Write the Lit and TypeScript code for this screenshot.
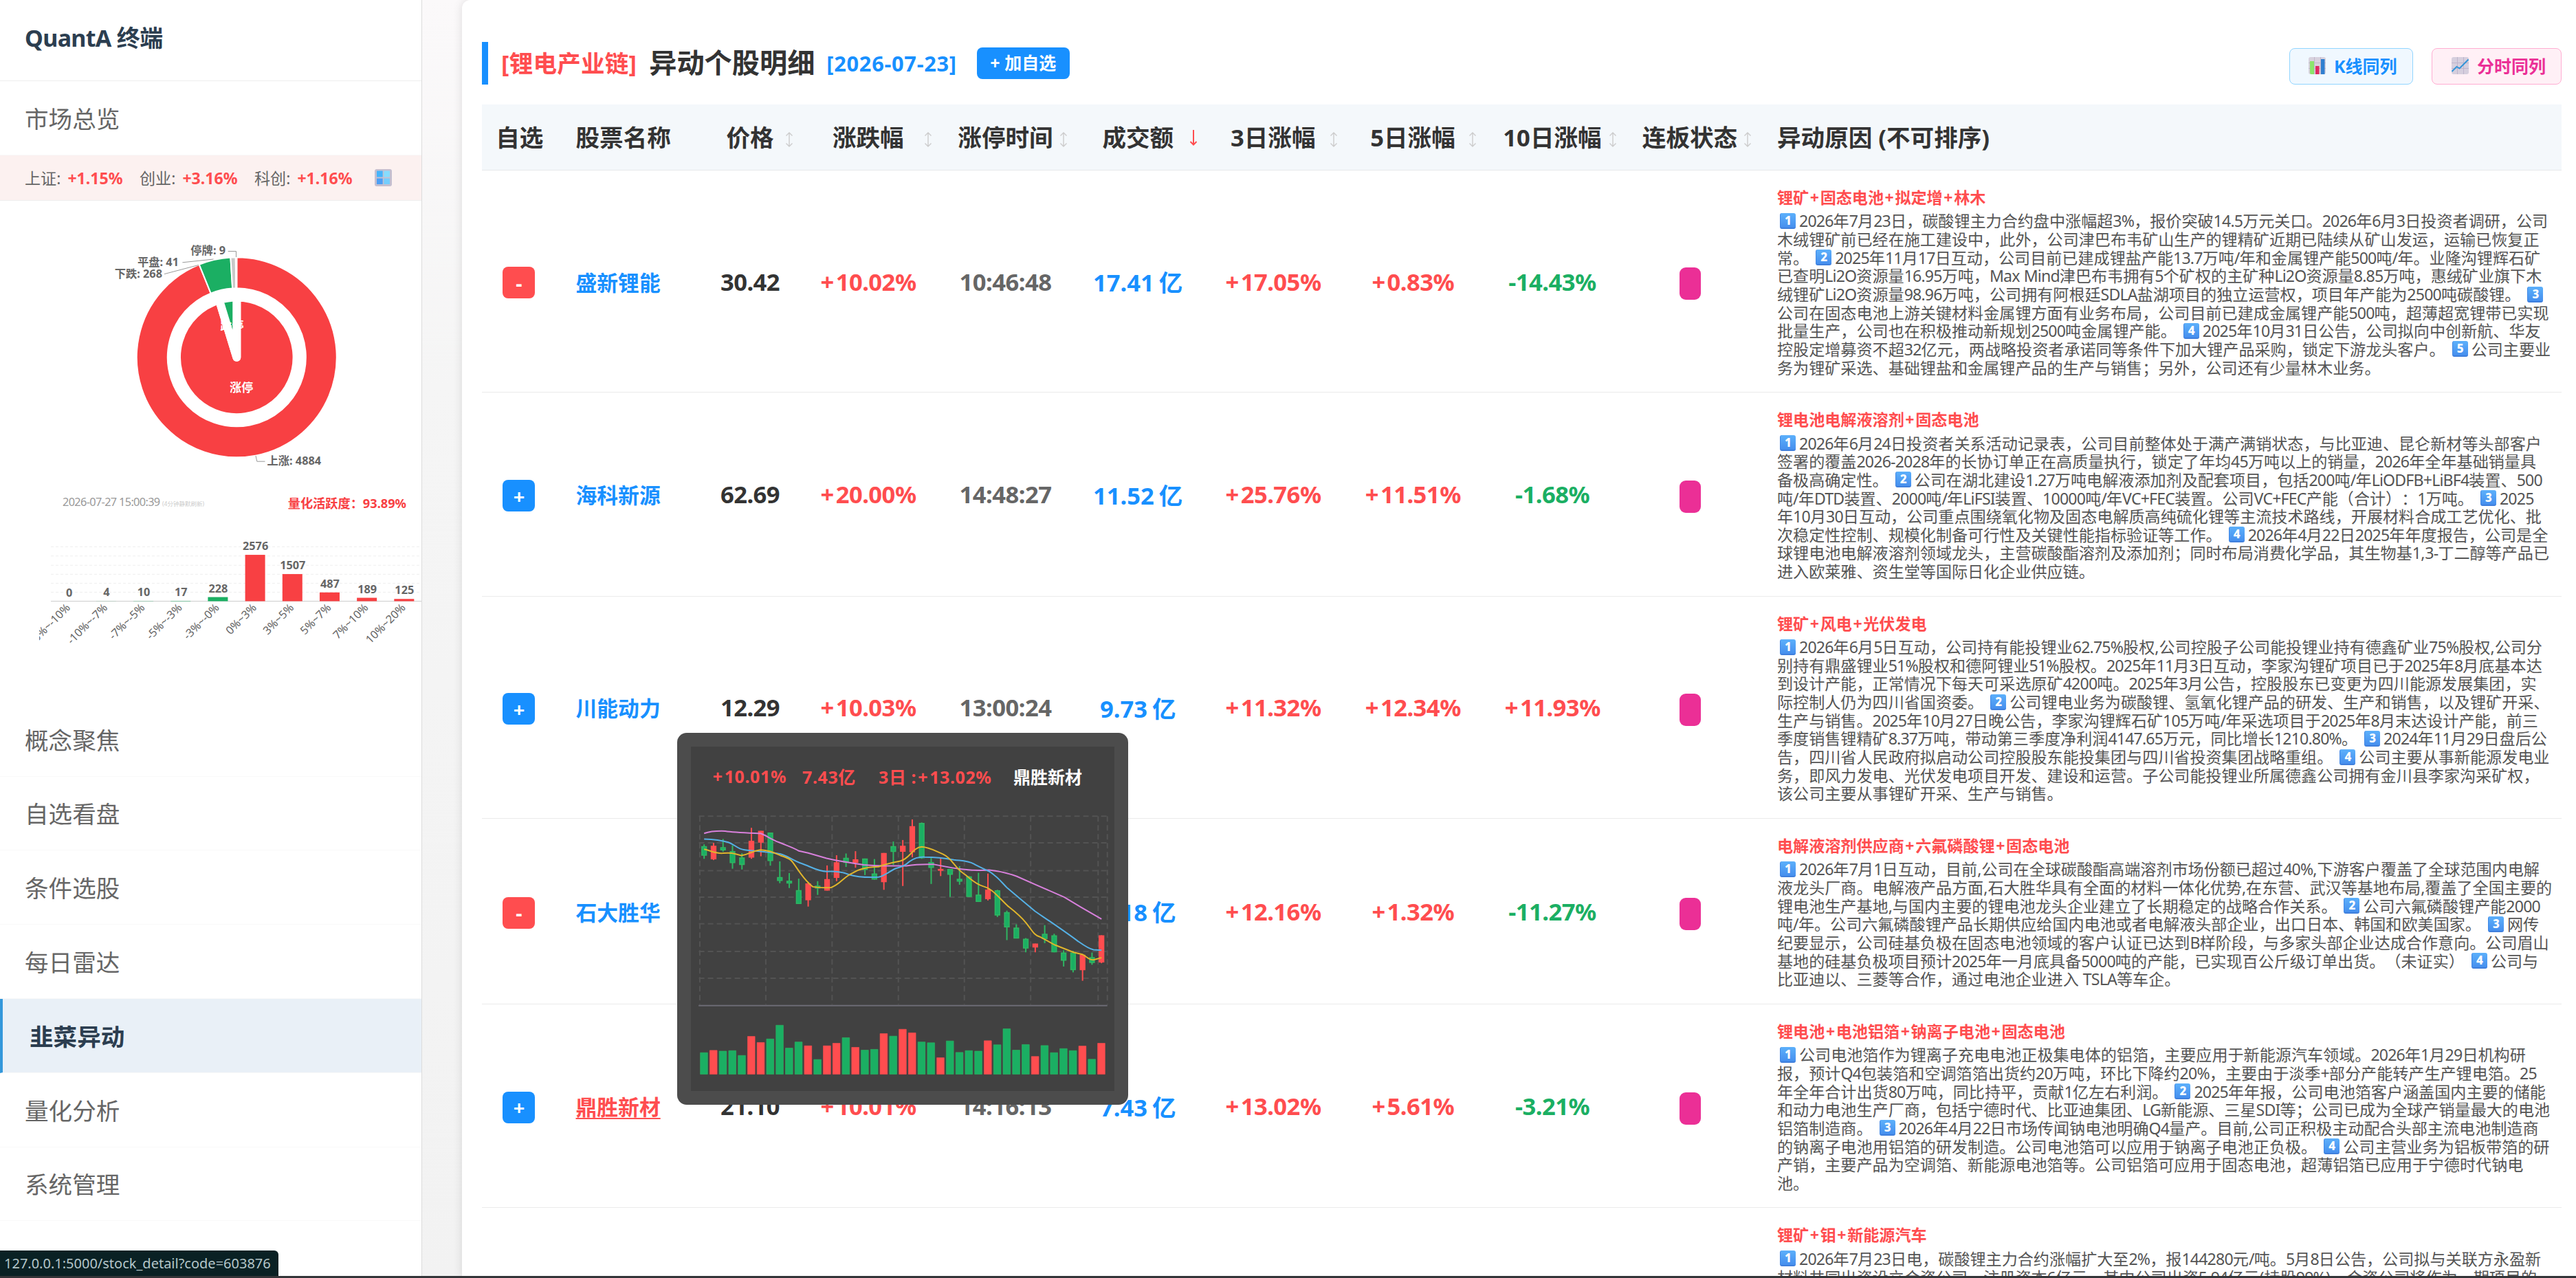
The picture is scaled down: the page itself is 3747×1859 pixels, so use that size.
import { css, html, svg, LitElement, nothing } from 'lit';
import { customElement, property } from 'lit/decorators.js';
import { classMap } from 'lit/directives/class-map.js';

const LINE_BREAK = '\n';

// Wraps latin runs and keycap markers so that they can be spaced apart from the Chinese text.
const richText = (text: string) =>
  text.split(/(#\d|[A-Za-z0-9.%+\-/]+)/).map((part, i) => {
    if (i % 2 === 0) return part;
    if (part.startsWith('#')) return html`<span class="keycap">${part.slice(1)}</span>`;
    return html`<span class="latin">${part}</span>`;
  });

// The plus sign gets a little air on both sides.
const spacedPlus = (text: string) =>
  text.split(/(\+)/).map((part) => (part === '+' ? html`<span class="plus">+</span>` : part));

interface Stock {
  picked: boolean;
  name: string;
  hovered?: boolean;
  price: string;
  change: string;
  time: string;
  amount: string;
  day3: string;
  day5: string;
  day10: string;
  tags: string;
  reason: string;
}

const STOCKS: Stock[] = [
  {
    picked: true,
    name: '盛新锂能',
    price: '30.42',
    change: '+10.02%',
    time: '10:46:48',
    amount: '17.41 亿',
    day3: '+17.05%',
    day5: '+0.83%',
    day10: '-14.43%',
    tags: '锂矿+固态电池+拟定增+林木',
    reason: `#12026年7月23日，碳酸锂主力合约盘中涨幅超3%，报价突破14.5万元关口。2026年6月3日投资者调研，公司
木绒锂矿前已经在施工建设中，此外，公司津巴布韦矿山生产的锂精矿近期已陆续从矿山发运，运输已恢复正
常。 #22025年11月17日互动，公司目前已建成锂盐产能13.7万吨/年和金属锂产能500吨/年。业隆沟锂辉石矿
已查明Li2O资源量16.95万吨，Max Mind津巴布韦拥有5个矿权的主矿种Li2O资源量8.85万吨，惠绒矿业旗下木
绒锂矿Li2O资源量98.96万吨，公司拥有阿根廷SDLA盐湖项目的独立运营权，项目年产能为2500吨碳酸锂。 #3
公司在固态电池上游关键材料金属锂方面有业务布局，公司目前已建成金属锂产能500吨，超薄超宽锂带已实现
批量生产，公司也在积极推动新规划2500吨金属锂产能。 #42025年10月31日公告，公司拟向中创新航、华友
控股定增募资不超32亿元，两战略投资者承诺同等条件下加大锂产品采购，锁定下游龙头客户。 #5公司主要业
务为锂矿采选、基础锂盐和金属锂产品的生产与销售；另外，公司还有少量林木业务。`,
  },
  {
    picked: false,
    name: '海科新源',
    price: '62.69',
    change: '+20.00%',
    time: '14:48:27',
    amount: '11.52 亿',
    day3: '+25.76%',
    day5: '+11.51%',
    day10: '-1.68%',
    tags: '锂电池电解液溶剂+固态电池',
    reason: `#12026年6月24日投资者关系活动记录表，公司目前整体处于满产满销状态，与比亚迪、昆仑新材等头部客户
签署的覆盖2026-2028年的长协订单正在高质量执行，锁定了年均45万吨以上的销量，2026年全年基础销量具
备极高确定性。 #2公司在湖北建设1.27万吨电解液添加剂及配套项目，包括200吨/年LiODFB+LiBF4装置、500
吨/年DTD装置、2000吨/年LiFSI装置、10000吨/年VC+FEC装置。公司VC+FEC产能（合计）：1万吨。 #32025
年10月30日互动，公司重点围绕氧化物及固态电解质高纯硫化锂等主流技术路线，开展材料合成工艺优化、批
次稳定性控制、规模化制备可行性及关键性能指标验证等工作。 #42026年4月22日2025年年度报告，公司是全
球锂电池电解液溶剂领域龙头，主营碳酸酯溶剂及添加剂；同时布局消费化学品，其生物基1,3-丁二醇等产品已
进入欧莱雅、资生堂等国际日化企业供应链。`,
  },
  {
    picked: false,
    name: '川能动力',
    price: '12.29',
    change: '+10.03%',
    time: '13:00:24',
    amount: '9.73 亿',
    day3: '+11.32%',
    day5: '+12.34%',
    day10: '+11.93%',
    tags: '锂矿+风电+光伏发电',
    reason: `#12026年6月5日互动，公司持有能投锂业62.75%股权,公司控股子公司能投锂业持有德鑫矿业75%股权,公司分
别持有鼎盛锂业51%股权和德阿锂业51%股权。2025年11月3日互动，李家沟锂矿项目已于2025年8月底基本达
到设计产能，正常情况下每天可采选原矿4200吨。2025年3月公告，控股股东已变更为四川能源发展集团，实
际控制人仍为四川省国资委。 #2公司锂电业务为碳酸锂、氢氧化锂产品的研发、生产和销售，以及锂矿开采、
生产与销售。2025年10月27日晚公告，李家沟锂辉石矿105万吨/年采选项目于2025年8月末达设计产能，前三
季度销售锂精矿8.37万吨，带动第三季度净利润4147.65万元，同比增长1210.80%。 #32024年11月29日盘后公
告，四川省人民政府拟启动公司控股股东能投集团与四川省投资集团战略重组。 #4公司主要从事新能源发电业
务，即风力发电、光伏发电项目开发、建设和运营。子公司能投锂业所属德鑫公司拥有金川县李家沟采矿权，
该公司主要从事锂矿开采、生产与销售。`,
  },
  {
    picked: true,
    name: '石大胜华',
    price: '',
    change: '',
    time: '',
    amount: '8.18 亿',
    day3: '+12.16%',
    day5: '+1.32%',
    day10: '-11.27%',
    tags: '电解液溶剂供应商+六氟磷酸锂+固态电池',
    reason: `#12026年7月1日互动，目前,公司在全球碳酸酯高端溶剂市场份额已超过40%,下游客户覆盖了全球范围内电解
液龙头厂商。电解液产品方面,石大胜华具有全面的材料一体化优势,在东营、武汉等基地布局,覆盖了全国主要的
锂电池生产基地,与国内主要的锂电池龙头企业建立了长期稳定的战略合作关系。 #2公司六氟磷酸锂产能2000
吨/年。公司六氟磷酸锂产品长期供应给国内电池或者电解液头部企业，出口日本、韩国和欧美国家。 #3网传
纪要显示，公司硅基负极在固态电池领域的客户认证已达到B样阶段，与多家头部企业达成合作意向。公司眉山
基地的硅基负极项目预计2025年一月底具备5000吨的产能，已实现百公斤级订单出货。（未证实） #4公司与
比亚迪以、三菱等合作，通过电池企业进入 TSLA等车企。`,
  },
  {
    picked: false,
    name: '鼎胜新材',
    hovered: true,
    price: '21.10',
    change: '+10.01%',
    time: '14:16:13',
    amount: '7.43 亿',
    day3: '+13.02%',
    day5: '+5.61%',
    day10: '-3.21%',
    tags: '锂电池+电池铝箔+钠离子电池+固态电池',
    reason: `#1公司电池箔作为锂离子充电电池正极集电体的铝箔，主要应用于新能源汽车领域。2026年1月29日机构研
报，预计Q4包装箔和空调箔箔出货约20万吨，环比下降约20%，主要由于淡季+部分产能转产生产锂电箔。25
年全年合计出货80万吨，同比持平，贡献1亿左右利润。 #22025年年报，公司电池箔客户涵盖国内主要的储能
和动力电池生产厂商，包括宁德时代、比亚迪集团、LG新能源、三星SDI等；公司已成为全球产销量最大的电池
铝箔制造商。 #32026年4月22日市场传闻钠电池明确Q4量产。目前,公司正积极主动配合头部主流电池制造商
的钠离子电池用铝箔的研发制造。公司电池箔可以应用于钠离子电池正负极。 #4公司主营业务为铝板带箔的研
产销，主要产品为空调箔、新能源电池箔等。公司铝箔可应用于固态电池，超薄铝箔已应用于宁德时代钠电
池。`,
  },
  {
    picked: false,
    name: '',
    price: '',
    change: '',
    time: '',
    amount: '',
    day3: '',
    day5: '',
    day10: '',
    tags: '锂矿+钼+新能源汽车',
    reason: `#12026年7月23日电，碳酸锂主力合约涨幅扩大至2%，报144280元/吨。5月8日公告，公司拟与关联方永盈新
材料共同出资设立合资公司，注册资本6亿元，其中公司出资5.94亿元(持股99%)，合资公司将作为一期项目的`,
  },
];

const COLUMNS = [
  { label: '自选' },
  { label: '股票名称', left: true },
  { label: '价格', sort: '↕' },
  { label: '涨跌幅', sort: '↕' },
  { label: '涨停时间', sort: '↕' },
  { label: '成交额', sort: '↓' },
  { label: '3日涨幅', sort: '↕' },
  { label: '5日涨幅', sort: '↕' },
  { label: '10日涨幅', sort: '↕' },
  { label: '连板状态', sort: '↕' },
  { label: '异动原因 (不可排序)', left: true },
];

const FONT = css`'Noto Sans', 'Noto Sans CJK SC', sans-serif`;

@customElement('breadth-chart')
class BreadthChart extends LitElement {
  static styles = css`
    :host {
      display: block;
      height: 730px;
    }
    svg {
      display: block;
      font-family: ${FONT};
      font-size: 16.3px;
      fill: #666;
    }
    .bold {
      font-weight: 700;
    }
    .inside {
      fill: #fff;
      font-weight: 700;
      font-size: 17px;
    }
    .leader {
      fill: none;
      stroke: #999;
    }
    .time {
      fill: #999;
      letter-spacing: -0.65px;
    }
    .hint {
      fill: #ccc;
      font-size: 8.5px;
    }
    .active {
      fill: #f84043;
      font-size: 18.2px;
      font-weight: 700;
    }
    .grid {
      stroke: #eee;
      stroke-dasharray: 4 3;
    }
  `;

  private buckets: [string, number][] = [
    ['-20%~-10%', 0],
    ['-10%~-7%', 4],
    ['-7%~-5%', 10],
    ['-5%~-3%', 17],
    ['-3%~-0%', 228],
    ['0%~3%', 2576],
    ['3%~5%', 1507],
    ['5%~7%', 487],
    ['7%~10%', 189],
    ['10%~20%', 125],
  ];

  private slice(from: number, to: number, outer: number, inner: number) {
    const at = (deg: number, r: number) => {
      const a = (deg * Math.PI) / 180;
      return `${(r * Math.sin(a)).toFixed(2)} ${(-r * Math.cos(a)).toFixed(2)}`;
    };
    const large = to - from > 180 ? 1 : 0;
    const back = inner ? `L${at(to, inner)}A${inner} ${inner} 0 ${large} 0 ${at(from, inner)}` : 'L0 0';
    return `M${at(from, outer)}A${outer} ${outer} 0 ${large} 1 ${at(to, outer)}${back}Z`;
  }

  render() {
    const base = 874.5;
    return html`
      <svg width="613" height="730" viewBox="0 292 613 730">
        <g transform="translate(344.3 519.8)" stroke="#fff" stroke-linejoin="round">
          <g stroke-width="2">
            <path d=${this.slice(0, 338, 145.5, 100.5)} fill="#f84043"></path>
            <path d=${this.slice(338, 356.5, 145.5, 100.5)} fill="#1baf63"></path>
            <path d=${this.slice(356.5, 359.4, 145.5, 100.5)} fill="#c9c9c9"></path>
            <path d=${this.slice(359.4, 360, 145.5, 100.5)} fill="#c9c9c9"></path>
          </g>
          <g stroke-width="12">
            <path d=${this.slice(0, 343, 87.3, 0)} fill="#f84043"></path>
            <path d=${this.slice(343, 360, 87.3, 0)} fill="#1baf63"></path>
          </g>
        </g>
        <text class="inside" x="337.4" y="479.5" text-anchor="middle">跌停</text>
        <text class="inside" x="351.3" y="570" text-anchor="middle">涨停</text>
        <path
          class="leader"
          d="M331.7 365.5H343.5V374M265.4 381.8L310.5 377M239 398.6L288.8 385.5M372 663L373.8 671.2H385.5"
        ></path>
        <text class="bold" x="328" y="370" text-anchor="end">停牌: 9</text>
        <text class="bold" x="260" y="386.5" text-anchor="end">平盘: 41</text>
        <text class="bold" x="236" y="403.5" text-anchor="end">下跌: 268</text>
        <text class="bold" x="388.5" y="676">上涨: 4884</text>
        <text class="time" x="91" y="736">2026-07-27 15:00:39</text>
        <text class="hint" x="236" y="735.5">(4分钟静默刷新)</text>
        <text class="active" x="591" y="739" text-anchor="end">量化活跃度：93.89%</text>
        ${[795.3, 808.8, 822.2, 835.3, 848.4, 861.4].map((y) => svg`<line class="grid" x1="74" x2="613" y1=${y} y2=${y} />`)}
        <line x1="74" x2="613" y1=${base} y2=${base} stroke="#ccc"></line>
        <clipPath id="plot"><rect x="57" y="780" width="556" height="200"></rect></clipPath>
        <g clip-path="url(#plot)">
          ${this.buckets.map(([label, count], i) => {
            const x = 100.2 + i * 54.18;
            const h = count / 38.2;
            return svg`
              <rect x=${x - 14.5} y=${base - h} width="29" height=${h} fill=${i < 5 ? '#1baf63' : '#f84043'} />
              <text class="bold" x=${x + 0.5} y=${base - h - 7} text-anchor="middle">${count}</text>
              <text transform="translate(${x + 3} 885) rotate(-45)" text-anchor="end">${label}</text>`;
          })}
        </g>
      </svg>
    `;
  }
}

@customElement('side-bar')
class SideBar extends LitElement {
  static styles = css`
    :host {
      display: block;
      box-sizing: border-box;
      width: 614px;
      height: 100%;
      border-right: 1px solid #dcdcdc;
      background: #fff;
      flex: none;
    }
    .brand {
      height: 118px;
      box-sizing: border-box;
      padding: 29px 36px 0;
      border-bottom: 1px solid #eee;
      color: #2c3e50;
      font-size: 34px;
      line-height: 52px;
      font-weight: 700;
      letter-spacing: -0.02em;
    }
    .item {
      display: flex;
      align-items: center;
      box-sizing: border-box;
      height: 107.8px;
      padding: 0 0 1px 36px;
      border-bottom: 1px solid #f9f9f9;
      color: #666;
      font-size: 34.6px;
    }
    .item.current {
      border-left: 4px solid #3498db;
      padding-left: 39px;
      background: #e9f0f7;
      color: #2c3e50;
      font-weight: 700;
    }
    .indices {
      display: flex;
      align-items: center;
      box-sizing: border-box;
      height: 66px;
      padding-left: 36px;
      background: #fcf1f0;
      border-bottom: 1px solid #eee;
      color: #666;
      font-size: 23.1px;
    }
    .index {
      width: 167px;
      white-space: nowrap;
    }
    .index b {
      margin-left: 4px;
      color: #ff4d4f;
    }
    .indices svg {
      margin-left: 8px;
    }
  `;

  render() {
    return html`
      <div class="brand">QuantA 终端</div>
      <div class="item">市场总览</div>
      <div class="indices">
        <span class="index">上证: <b>+1.15%</b></span>
        <span class="index">创业: <b>+3.16%</b></span>
        <span class="index">科创: <b>+1.16%</b></span>
        <svg width="25" height="25" viewBox="0 0 25 25">
          <rect width="25" height="25" rx="3" fill="#c4bfd0"></rect>
          <rect x="3" y="2.5" width="8.7" height="9" fill="#45b4fb"></rect>
          <rect x="13.3" y="2.5" width="8.7" height="9" fill="#86dcfd"></rect>
          <rect x="3" y="13.5" width="8.7" height="8.5" fill="#4c9ff5"></rect>
          <rect x="13.3" y="13.5" width="8.7" height="8.5" fill="#74cdfd"></rect>
        </svg>
      </div>
      <breadth-chart></breadth-chart>
      ${['概念聚焦', '自选看盘', '条件选股', '每日雷达', '韭菜异动', '量化分析', '系统管理'].map(
        (label) => html`<div class=${classMap({ item: true, current: label === '韭菜异动' })}>${label}</div>`
      )}
    `;
  }
}

@customElement('kline-popup')
class KlinePopup extends LitElement {
  static styles = css`
    :host {
      display: block;
      box-sizing: border-box;
      width: 656px;
      height: 541px;
      padding: 20px;
      border-radius: 14px;
      background: #4c4c4c;
    }
    .panel {
      height: 501px;
      background: #414141;
    }
    .summary {
      display: flex;
      align-items: center;
      height: 86px;
      padding-left: 31px;
      color: #ff4d4f;
      font-size: 25px;
      font-weight: 700;
      letter-spacing: 0.6px;
      white-space: nowrap;
    }
    .change {
      width: 131px;
    }
    .amount {
      width: 111px;
    }
    .day3 {
      width: 196px;
    }
    .name {
      color: #fff;
      letter-spacing: 0;
    }
    .plus {
      padding: 0 0.08em;
    }
    .change .plus {
      padding-left: 0.03em;
    }
    svg {
      display: block;
    }
    svg * {
      vector-effect: non-scaling-stroke;
    }
    .grid {
      stroke: #535353;
      stroke-width: 2;
      stroke-dasharray: 8 5;
    }
    .up {
      fill: #ff4d4f;
      stroke: #ff4d4f;
    }
    .down {
      fill: #1baf63;
      stroke: #2fb562;
    }
    .average {
      fill: none;
      stroke-width: 2;
    }
  `;

  // top, bottom, high, low, volume top; a rising day is marked by 1
  private days = [
    [490, 524, 481, 538, 1301, 0],
    [489, 538, 475, 543, 1292, 1],
    [494, 503, 460, 510, 1295, 0],
    [510, 553, 485, 577, 1293, 0],
    [535, 560, 516, 580, 1312, 0],
    [469, 531, 416, 538, 1237, 1],
    [430, 472, 428, 528, 1261, 1],
    [437, 545, 435, 565, 1247, 0],
    [612, 623, 548, 634, 1193, 0],
    [626, 633, 594, 653, 1283, 0],
    [663, 714, 616, 716, 1259, 0],
    [637, 699, 630, 726, 1274, 1],
    [646, 653, 626, 680, 1328, 0],
    [620, 661, 564, 663, 1274, 1],
    [554, 611, 524, 626, 1264, 1],
    [536, 552, 517, 570, 1242, 0],
    [542, 552, 508, 573, 1280, 1],
    [539, 580, 537, 602, 1291, 0],
    [598, 618, 539, 620, 1288, 0],
    [517, 628, 515, 660, 1226, 1],
    [490, 509, 470, 562, 1236, 0],
    [489, 508, 464, 645, 1209, 1],
    [412, 510, 383, 532, 1223, 1],
    [399, 534, 395, 538, 1259, 0],
    [553, 572, 535, 637, 1262, 0],
    [580, 583, 537, 606, 1321, 1],
    [580, 599, 578, 688, 1255, 0],
    [619, 626, 567, 640, 1300, 0],
    [609, 686, 606, 688, 1293, 0],
    [681, 706, 593, 708, 1295, 0],
    [661, 695, 596, 702, 1254, 1],
    [664, 759, 660, 767, 1270, 0],
    [750, 806, 742, 858, 1207, 0],
    [811, 850, 796, 851, 1291, 0],
    [855, 889, 850, 906, 1269, 0],
    [874, 885, 872, 906, 1316, 1],
    [835, 852, 799, 870, 1273, 0],
    [841, 904, 833, 906, 1301, 0],
    [909, 937, 898, 962, 1285, 0],
    [909, 974, 900, 985, 1293, 0],
    [918, 974, 915, 1018, 1275, 1],
    [927, 946, 907, 955, 1327, 0],
    [841, 944, 839, 949, 1264, 1],
  ];

  render() {
    return html`
      <div class="panel">
        <div class="summary">
          <span class="change">${spacedPlus('+10.01%')}</span>
          <span class="amount">7.43亿</span>
          <span class="day3">${spacedPlus('3日 :+13.02%')}</span>
          <span class="name">鼎胜新材</span>
        </div>
        <svg width="616" height="415" viewBox="78 329 1380 1123" preserveAspectRatio="none">
          ${[107, 322, 538, 754, 969, 1185, 1405, 1435].map((x) => svg`<line class="grid" x1=${x} x2=${x} y1="370" y2="1112" />`)}
          ${[370, 475, 585, 689, 794, 903, 1008].map((y) => svg`<line class="grid" x1="104" x2="1435" y1=${y} y2=${y} />`)}
          <line x1="103" x2="1435" y1="1116" y2="1116" stroke="#6c6b74" stroke-width="2"></line>
          ${this.days.map(([top, bottom, high, low, volume, up], i) => {
            const x = 121 + i * 30.83;
            return svg`
              <g class=${up ? 'up' : 'down'}>
                <line x1=${x} x2=${x} y1=${high} y2=${low} stroke-width="2" />
                <rect x=${x - 7.5} y=${top} width="15" height=${bottom - top} stroke-width="1.6" />
                <rect x=${x - 12.5} y=${volume} width="24" height=${1386 - volume} stroke-width="0.6" />
              </g>`;
          })}
          <path
            class="average"
            stroke="#d880dc"
            d="M121 438C140 430 165 428 190 429C215 434 245 435 305 438C325 447 340 462 365 473C390 486 405 490 430 507L460 515L520 536C560 548 600 552 640 562C680 567 730 566 780 566C810 560 840 559 870 560C900 567 930 575 965 579C1000 584 1030 584 1050 582C1080 586 1115 596 1140 607L1200 639L1295 689L1350 729L1416 775"
          ></path>
          <path
            class="average"
            stroke="#55b1e6"
            d="M121 460C150 461 175 464 200 473C220 481 230 499 250 502C280 508 320 508 370 519C395 527 410 545 440 557C465 567 490 587 520 588C550 587 570 588 595 601C625 612 655 612 690 610C710 604 725 587 745 576C765 569 775 566 790 549C805 536 820 530 840 531C880 531 900 534 935 542C960 546 980 545 1000 558C1015 569 1030 575 1050 588C1080 610 1090 631 1110 654C1145 690 1180 725 1200 745C1240 778 1290 818 1340 863C1360 880 1375 893 1390 896L1416 898"
          ></path>
          <path
            class="average"
            stroke="#e0b52c"
            d="M121 500C145 507 160 518 182 516C205 513 215 515 242 525C270 520 280 506 305 503C335 505 345 513 370 525C395 535 403 540 410 552C430 585 445 620 475 648C495 653 515 652 535 651C565 638 575 610 605 594C630 575 655 571 690 569C710 560 735 553 760 547C790 540 800 493 830 491C855 493 870 505 900 520C930 538 930 560 960 590C990 615 1000 635 1030 646C1060 655 1075 683 1110 723C1130 742 1150 760 1170 790C1190 820 1195 838 1215 845L1264 877L1325 906L1355 915C1370 925 1375 936 1390 936L1416 927"
          ></path>
        </svg>
      </div>
    `;
  }
}

@customElement('stock-table')
class StockTable extends LitElement {
  static styles = css`
    :host {
      display: block;
      color: #333;
    }
    .head,
    .row {
      display: grid;
      grid-template-columns: 109.5px 210px 141px 202.5px 197px 188.5px 204.5px 202px 204px 196px 1170px;
      align-items: center;
      box-sizing: border-box;
      white-space: nowrap;
    }
    .head {
      height: 96px;
      padding-bottom: 3px;
      background: #f4f8fb;
      border-bottom: 1px solid #e6e8ea;
      font-size: 34.6px;
      font-weight: 700;
    }
    .head .cell {
      position: relative;
    }
    .sort {
      position: absolute;
      right: 7px;
      top: 50%;
      width: 14px;
      height: 24px;
      margin-top: -7px;
      fill: none;
      stroke: #ccc;
      stroke-width: 1.4;
    }
    .sort.on {
      stroke: #ff4d4f;
      stroke-width: 2;
      margin-top: -9px;
    }
    .row {
      border-bottom: 1px solid #ebebeb;
      font-size: 34.6px;
      font-weight: 700;
      letter-spacing: -0.015em;
    }
    .cell {
      text-align: center;
    }
    .cell.left {
      text-align: left;
      padding-left: 27px;
    }
    .cell.left:last-child {
      padding-left: 29px;
    }
    .toggle {
      display: inline-flex;
      align-items: center;
      justify-content: center;
      margin-right: 2px;
      width: 47px;
      height: 46px;
      border-radius: 8px;
      background: #1890ff;
      color: #fff;
      font-size: 29px;
      vertical-align: middle;
    }
    .toggle.remove {
      background: #ff4d4f;
    }
    .name {
      color: #1890ff;
      font-size: 30.8px;
      letter-spacing: 0;
    }
    .name.hovered {
      color: #ff4d4f;
      text-decoration: underline;
      text-decoration-thickness: 2px;
      text-underline-offset: 4px;
    }
    .up {
      color: #ff4d4f;
    }
    .down {
      color: #1baf63;
    }
    .plus {
      padding: 0 0.08em 0 0.02em;
    }
    .time {
      color: #666;
    }
    .amount {
      color: #1890ff;
      letter-spacing: 0;
      word-spacing: -2px;
    }
    .board {
      display: inline-block;
      width: 31px;
      height: 47px;
      border-radius: 9px;
      background: #eb2f96;
      vertical-align: middle;
      margin-top: 7px;
    }
    .reason {
      align-self: start;
      padding: 26px 0 22px 29px;
      font-size: 23.1px;
      line-height: 26.65px;
      font-weight: 400;
      letter-spacing: 0;
      color: #555;
      text-spacing-trim: space-all;
    }
    .tags {
      height: 26.65px;
      margin-bottom: 7.8px;
      color: #ff4d4f;
      font-weight: 700;
    }
    .tags .plus {
      padding: 0 0.07em;
    }
    .line {
      height: 26.65px;
    }
    .latin {
      letter-spacing: -0.035em;
    }
    .keycap {
      display: inline-block;
      box-sizing: border-box;
      width: 23px;
      height: 23px;
      margin: -4px 5px -4px 4px;
      border-radius: 3px;
      background: linear-gradient(#5cb0fb, #468fee);
      border-bottom: 2px solid #3f7fdc;
      border-left: 1px solid #3f86e4;
      color: #fff;
      font-size: 17px;
      line-height: 21px;
      font-weight: 800;
      text-align: center;
      vertical-align: 3.5px;
    }
  `;

  renderPercent(value: string) {
    return html`<div class=${classMap({ cell: true, up: value.startsWith('+'), down: value.startsWith('-') })}>
      ${spacedPlus(value)}
    </div>`;
  }

  renderRow(stock: Stock) {
    return html`
      <div class="row">
        <div class="cell">
          ${stock.name
            ? html`<span class=${classMap({ toggle: true, remove: stock.picked })}>${stock.picked ? '-' : '+'}</span>`
            : nothing}
        </div>
        <div class="cell left">
          <span class=${classMap({ name: true, hovered: !!stock.hovered })}>${stock.name}</span>
        </div>
        <div class="cell">${stock.price}</div>
        ${this.renderPercent(stock.change)}
        <div class="cell time">${stock.time}</div>
        <div class="cell amount">${stock.amount}</div>
        ${this.renderPercent(stock.day3)} ${this.renderPercent(stock.day5)} ${this.renderPercent(stock.day10)}
        <div class="cell">${stock.name ? html`<span class="board"></span>` : nothing}</div>
        <div class="reason">
          <div class="tags">${spacedPlus(stock.tags)}</div>
          ${stock.reason.split(LINE_BREAK).map((line) => html`<div class="line">${richText(line)}</div>`)}
        </div>
      </div>
    `;
  }

  render() {
    return html`
      <div class="head">
        ${COLUMNS.map(
          ({ label, sort, left }) => html`
            <div class=${classMap({ cell: true, left: !!left })}>
              ${label}${sort
                ? html`<svg class=${classMap({ sort: true, on: sort === '↓' })} viewBox="0 0 14 24">
                    <path d=${sort === '↓' ? 'M7 0V21M2.5 17L7 21.5L11.5 17' : 'M7 2V22M2.5 6.5L7 2L11.5 6.5M2.5 17.5L7 22L11.5 17.5'}></path>
                  </svg>`
                : nothing}
            </div>
          `
        )}
      </div>
      ${STOCKS.map((stock) => this.renderRow(stock))}
    `;
  }
}

@customElement('app-root')
class AppRoot extends LitElement {
  static styles = css`
    :host {
      display: flex;
      position: relative;
      box-sizing: border-box;
      width: 3747px;
      height: 1859px;
      overflow: hidden;
      background: linear-gradient(#fbf9fa, #f5f5f5 30%, #f2f2f2);
      font-family: ${FONT};
    }
    .content {
      flex: 1;
      margin-left: 58px;
      padding: 61px 21px 0 29px;
      background: #fff;
      box-shadow: 0 0 14px rgba(0, 0, 0, 0.12);
      border-top-left-radius: 12px;
    }
    .title {
      display: flex;
      align-items: flex-start;
      height: 91px;
      font-weight: 700;
      line-height: 62px;
      white-space: nowrap;
    }
    .mark {
      width: 9px;
      height: 62px;
      background: #1890ff;
    }
    .sector {
      margin-left: 19px;
      color: #ff4d4f;
      font-size: 34.6px;
      letter-spacing: 0.2px;
    }
    .heading {
      margin-left: 18px;
      color: #333;
      font-size: 40.2px;
      line-height: 60px;
    }
    .date {
      margin-left: 17px;
      color: #1890ff;
      font-size: 30.8px;
      line-height: 63px;
      letter-spacing: 0.7px;
    }
    .add {
      margin: 8px 0 0 29px;
      width: 135px;
      height: 46px;
      border-radius: 8px;
      background: #1890ff;
      color: #fff;
      font-size: 25px;
      line-height: 44px;
      text-align: center;
    }
    .actions {
      display: flex;
      gap: 27px;
      margin-left: auto;
      padding-top: 9px;
      font-size: 25px;
      line-height: 40px;
    }
    .action {
      display: flex;
      align-items: center;
      gap: 12px;
      box-sizing: border-box;
      width: 180px;
      height: 53px;
      padding: 0 0 2px 27px;
      border: 1px solid #91d5ff;
      border-radius: 8px;
      background: #f0f8ff;
      color: #1890ff;
    }
    .action.pink {
      width: 189px;
      padding-left: 28px;
      border-color: #ffadd2;
      background: #fff0f6;
      color: #eb2f96;
    }
    .popup {
      position: absolute;
      left: 985px;
      top: 1066px;
    }
    .status {
      position: absolute;
      left: 0;
      bottom: 3px;
      width: 405px;
      height: 37px;
      box-sizing: border-box;
      padding-left: 6px;
      border-top-right-radius: 6px;
      background: #0a2124;
      color: #b4c6c9;
      font-size: 20px;
      line-height: 38px;
      white-space: nowrap;
    }
    .edge {
      position: absolute;
      left: 0;
      right: 0;
      bottom: 0;
      height: 3px;
      background: #333538;
    }
  `;

  @property({ type: String }) link = '127.0.0.1:5000/stock_detail?code=603876';

  render() {
    return html`
      <side-bar></side-bar>
      <div class="content">
        <div class="title">
          <span class="mark"></span>
          <span class="sector">[锂电产业链]</span>
          <span class="heading">异动个股明细</span>
          <span class="date">[2026-07-23]</span>
          <span class="add">+ 加自选</span>
          <div class="actions">
            <span class="action">
              <svg width="25" height="25" viewBox="0 0 25 25">
                <rect width="25" height="25" rx="3" fill="#d8d2de"></rect>
                <path d="M0 8.5h25M0 16.5h25M8.5 0v25M17.5 0v25" stroke="#c0b6cc"></path>
                <path d="M2 6h6v19H4q-2 0-2-2z" fill="#8be56c"></path>
                <path d="M10 13h5.5v12H10z" fill="#dd2a63"></path>
                <path d="M18 3h5.5v22H18z" fill="#2f7fd0"></path>
              </svg>
              K线同列
            </span>
            <span class="action pink">
              <svg width="25" height="25" viewBox="0 0 25 25">
                <rect width="25" height="25" rx="3" fill="#d6cfde"></rect>
                <path d="M0 8.5h25M0 16.5h25M8.5 0v25M17.5 0v25" stroke="#beb4cc"></path>
                <path d="M0.5 21L7.5 14L11.5 16.5L24.5 3.5" fill="none" stroke="#3494d8" stroke-width="2"></path>
              </svg>
              分时同列
            </span>
          </div>
        </div>
        <stock-table></stock-table>
      </div>
      <kline-popup class="popup"></kline-popup>
      <div class="status">${this.link}</div>
      <div class="edge"></div>
    `;
  }
}
